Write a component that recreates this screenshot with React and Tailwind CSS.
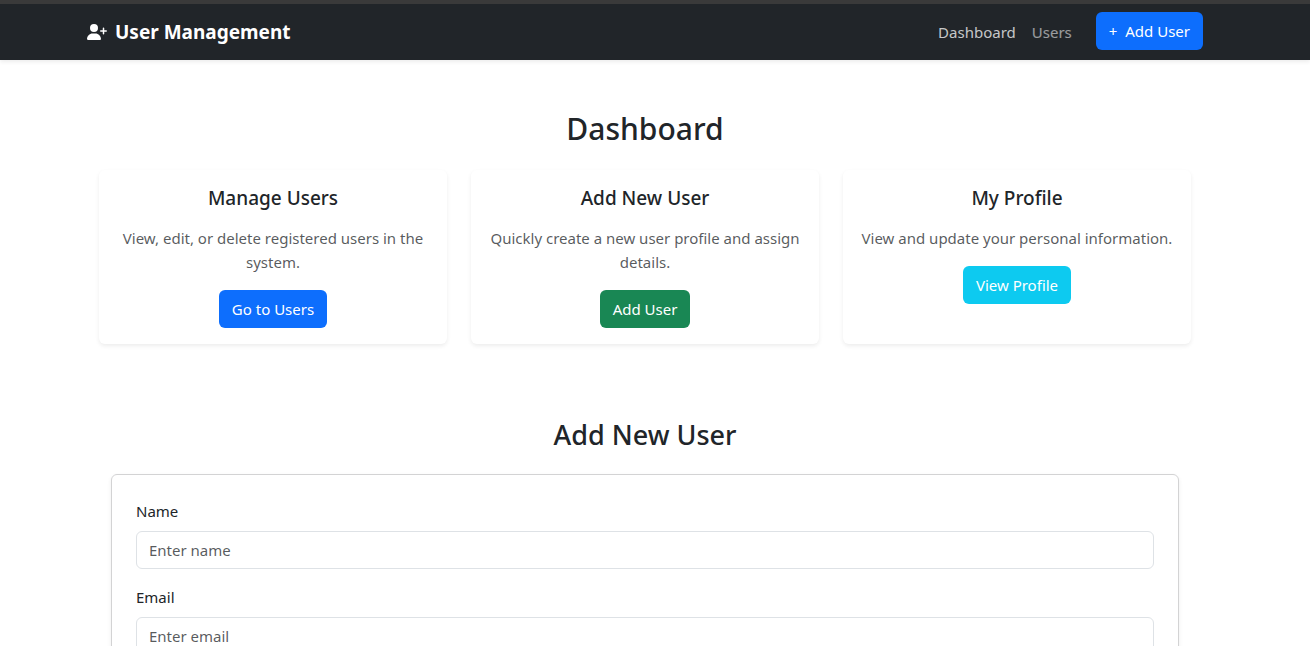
import { FaUserPlus } from "react-icons/fa6";

const cards = [
  {
    title: "Manage Users",
    text: "View, edit, or delete registered users in the system.",
    action: "Go to Users",
    color: "bg-[#0d6efd]",
  },
  {
    title: "Add New User",
    text: "Quickly create a new user profile and assign details.",
    action: "Add User",
    color: "bg-[#198754]",
  },
  {
    title: "My Profile",
    text: "View and update your personal information.",
    action: "View Profile",
    color: "bg-[#0dcaf0]",
  },
];

const fields = [
  { id: "name", label: "Name", type: "text", placeholder: "Enter name" },
  { id: "email", label: "Email", type: "email", placeholder: "Enter email" },
];

function Navbar() {
  return (
    <nav className="border-t-4 border-[#3a3a3a] bg-[#212529] pr-5 shadow-[0_2px_4px_rgba(0,0,0,0.075)]">
      <div className="mx-auto flex max-w-[1140px] items-start justify-between px-3 py-2">
        <a href="#top" className="flex h-10 items-center gap-2 text-[19px] font-bold text-white">
          <FaUserPlus className="h-4 w-5" aria-hidden="true" />
          User Management
        </a>
        <div className="flex items-start">
          <a href="#dashboard" className="p-2 leading-6 text-white/75">
            Dashboard
          </a>
          <a href="#users" className="p-2 leading-6 text-white/55">
            Users
          </a>
          <button type="button" className="ml-4 rounded-md bg-[#0d6efd] px-[13px] py-[7px] leading-6 text-white">
            <span className="mr-1">+</span> Add User
          </button>
        </div>
      </div>
    </nav>
  );
}

function ActionCard({ title, text, action, color }) {
  return (
    <article className="rounded-md bg-white p-4 text-center shadow-[0_2px_4px_rgba(0,0,0,0.075)]">
      <h3 className="mb-4 text-[19px] leading-6 font-medium">{title}</h3>
      <p className="mb-4 leading-6 text-[#212529]/75">{text}</p>
      <button type="button" className={`rounded-md px-[13px] py-[7px] leading-6 text-white ${color}`}>
        {action}
      </button>
    </article>
  );
}

export default function App() {
  return (
    <div
      id="top"
      className="h-screen overflow-y-auto bg-white font-['Noto_Sans',sans-serif] text-[15px] text-[#212529] [scrollbar-width:none]"
    >
      <Navbar />
      <main className="pr-5">
        <div className="mx-auto max-w-[1140px] px-6">
          <section id="dashboard" className="pt-12">
            <h1 className="mb-5 text-center text-[30px] leading-[42px] font-medium">Dashboard</h1>
            <div className="grid grid-cols-3 gap-6">
              {cards.map((card) => (
                <ActionCard key={card.title} {...card} />
              ))}
            </div>
          </section>
          <section className="px-3 pt-18 pb-12">
            <h2 className="mb-5 text-center text-[27px] leading-[38px] font-medium">Add New User</h2>
            <form className="flex flex-col gap-4 rounded-md border border-[#d3d3d4] p-6 shadow-[0_2px_4px_rgba(0,0,0,0.075)]">
              {fields.map((field) => (
                <div key={field.id}>
                  <label htmlFor={field.id} className="mb-2 block leading-6">
                    {field.label}
                  </label>
                  <input
                    id={field.id}
                    type={field.type}
                    placeholder={field.placeholder}
                    className="block w-full rounded-md border border-[#dee2e6] bg-white px-3 py-1.5 leading-6 placeholder:text-[#212529]/75"
                  />
                </div>
              ))}
            </form>
          </section>
        </div>
      </main>
    </div>
  );
}
